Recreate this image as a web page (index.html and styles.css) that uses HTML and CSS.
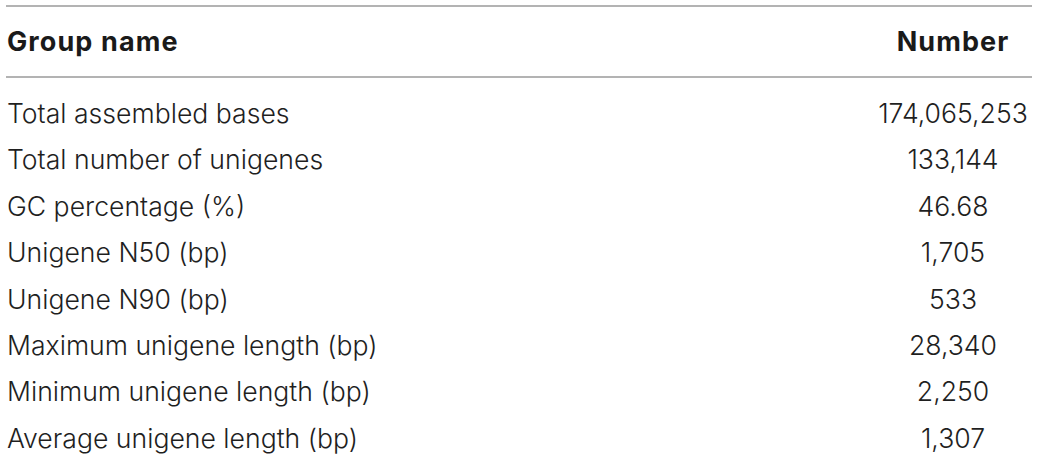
FILE: index.html
```html
<!DOCTYPE html>
<html lang="en">
<head>
<meta charset="utf-8">
<title>Assembly statistics</title>
<link rel="stylesheet" href="styles.css">
</head>
<body>
<table class="stats">
  <thead>
    <tr>
      <th class="name">Group name</th>
      <th class="num">Number</th>
    </tr>
  </thead>
  <tbody>
    <tr><td class="name">Total assembled bases</td><td class="num">174,065,253</td></tr>
    <tr><td class="name">Total number of unigenes</td><td class="num">133,144</td></tr>
    <tr><td class="name">GC percentage (%)</td><td class="num">46.68</td></tr>
    <tr><td class="name">Unigene N50 (bp)</td><td class="num">1,705</td></tr>
    <tr><td class="name">Unigene N90 (bp)</td><td class="num">533</td></tr>
    <tr><td class="name">Maximum unigene length (bp)</td><td class="num">28,340</td></tr>
    <tr><td class="name">Minimum unigene length (bp)</td><td class="num">2,250</td></tr>
    <tr><td class="name">Average unigene length (bp)</td><td class="num">1,307</td></tr>
  </tbody>
</table>
</body>
</html>
```
FILE: styles.css
```css
html, body {
  margin: 0;
  padding: 0;
  background: #ffffff;
}

body {
  font-family: Inter, "Liberation Sans", Arial, sans-serif;
  color: #1f1f1f;
}

.stats {
  margin: 5px 0 0 6px;
  width: 1026px;
  border-collapse: collapse;
  border-top: 2px solid #b3b3b3;
}

.stats th {
  height: 69px;
  padding: 0;
  font-weight: 700;
  font-size: 27px;
  letter-spacing: 1.1px;
  vertical-align: middle;
  border-bottom: 2px solid #b3b3b3;
  color: #1a1a1a;
}

.stats td {
  height: 46.4px;
  padding: 0;
  font-weight: 300;
  font-size: 26.6px;
  line-height: 46.4px;
  vertical-align: middle;
}

.stats tbody tr:first-child td {
  padding-top: 12px;
}

.stats .name {
  text-align: left;
  padding-left: 1px;
}

.stats .num {
  width: 158px;
  text-align: center;
}
```
